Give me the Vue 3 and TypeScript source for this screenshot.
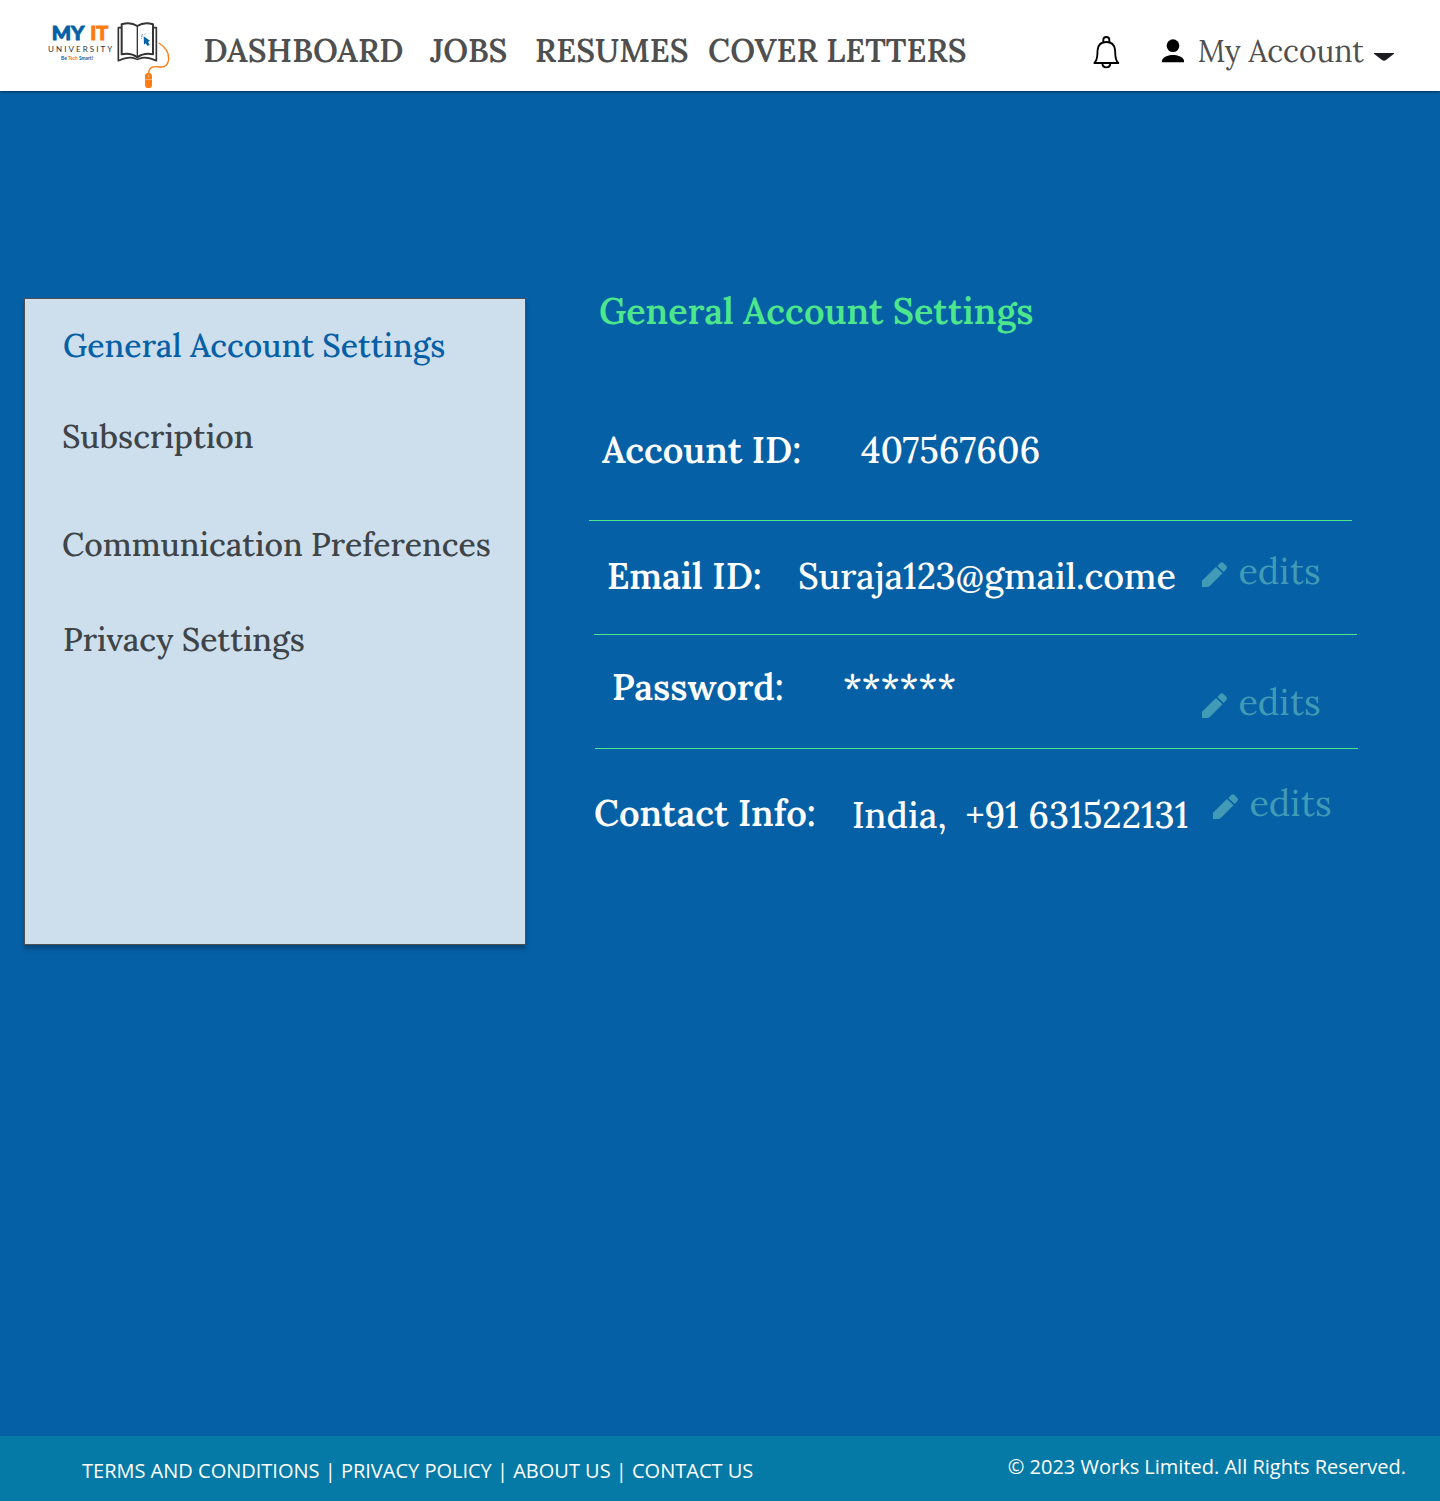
<script setup lang="ts">
interface Row {
  name: string
  label: string
  value: string
  editable: boolean
}

const nav: { text: string; kind: string }[] = [
  { text: 'DASHBOARD', kind: 'dashboard' },
  { text: 'JOBS', kind: 'jobs' },
  { text: 'RESUMES', kind: 'resumes' },
  { text: 'COVER LETTERS', kind: 'letters' },
]

const menu: { text: string; kind: string }[] = [
  { text: 'General Account Settings', kind: 'general' },
  { text: 'Subscription', kind: 'subscription' },
  { text: 'Communication Preferences', kind: 'communication' },
  { text: 'Privacy Settings', kind: 'privacy' },
]

const rows: Row[] = [
  { name: 'account', label: 'Account ID:', value: '407567606', editable: false },
  { name: 'email', label: 'Email ID:', value: 'Suraja123@gmail.come', editable: true },
  { name: 'password', label: 'Password:', value: '******', editable: true },
  { name: 'contact', label: 'Contact Info:', value: 'India,  +91 631522131', editable: true },
]
</script>

<template>
  <div class="page">
    <header class="topbar">
      <svg class="logo" viewBox="0 0 420 240" width="140" height="80">
        <text x="35" y="91" class="logo-my" textLength="98" lengthAdjust="spacingAndGlyphs">MY</text>
        <text x="151" y="91" class="logo-it" textLength="54" lengthAdjust="spacingAndGlyphs">IT</text>
        <text x="24" y="127" class="logo-uni" textLength="193">UNIVERSITY</text>
        <text x="63" y="149" class="logo-tag" textLength="96" lengthAdjust="spacingAndGlyphs">Be <tspan fill="#ff7a0f">Tech</tspan> Smart!</text>
        <g fill="none" stroke="#343436" stroke-width="6" stroke-linejoin="round">
          <path d="M245 43 Q272 35 292 48 Q312 35 339 43 V133 Q312 127 292 142 Q272 127 245 133 Z" />
          <path d="M292 48 V140" stroke-width="4" />
          <path d="M245 53 H235 V152 Q268 138 286 146 Q292 150 298 146 Q318 138 349 152 V53 H339" stroke-width="5" />
        </g>
        <path d="M311 79 L330 92 L324 96 L329 104 L323 108 L317 100 L312 104 Z" fill="#0560a6" />
        <path d="M308 72 V76 M303 80 H307 M304 75 L306 77 M314 74 L316 71 M304 86 L306 84" stroke="#0560a6" stroke-width="2" />
        <path d="M356 99 C374 108 387 128 386 146 C385 164 376 172 360 171 C340 168 326 171 326 191" fill="none" stroke="#ff7a0f" stroke-width="4" />
        <rect x="315" y="189" width="21" height="45" rx="10" fill="#ff7a0f" />
        <path d="M315 208 H336 M325.500 194 V203" stroke="#ffd2aa" stroke-width="2" />
      </svg>
      <nav class="nav">
        <a v-for="n in nav" :key="n.kind" :class="n.kind">{{ n.text }}</a>
      </nav>
      <svg class="bell" viewBox="38 44 80 104" width="26.670" height="34.670">
        <g fill="none" stroke="#000" stroke-width="5.500">
          <path d="M42 128 C54 116 50 102 52 88 C54 72 64 65 78 65 C92 65 102 72 104 88 C106 102 102 116 114 128 Z" stroke-linejoin="round" />
          <path d="M69 66 V58 Q69 50 78 50 Q87 50 87 58 V66" />
          <path d="M66 129 Q67 141 78 141 Q89 141 90 129" />
        </g>
      </svg>
      <svg class="person" viewBox="246 56 66 72" width="22" height="24">
        <circle cx="279" cy="76" r="19" />
        <path d="M246 126 V120 C250 108 266 104 279 104 C292 104 308 108 312 120 V126 Z" />
      </svg>
      <span class="account-name">My Account</span>
      <svg class="caret" viewBox="0 0 60 24" width="20" height="8">
        <path d="M1 0 H59 Q62 3 56 5 L36 21 Q30 25 24 21 L4 5 Q-2 3 1 0Z" fill="#1c1b1f" />
      </svg>
    </header>

    <main class="content">
      <aside class="menu">
        <a v-for="m in menu" :key="m.kind" :class="m.kind">{{ m.text }}</a>
      </aside>
      <section class="settings">
        <h1>General Account Settings</h1>
        <div v-for="r in rows" :key="r.name" class="row" :class="r.name">
          <span class="label">{{ r.label }}</span>
          <span class="value">{{ r.value }}</span>
          <a v-if="r.editable" class="edit">
            <svg viewBox="0 0 25 25" width="25" height="25">
              <path d="M0 18.700 L14 5 L20.500 11.300 L8 23.800 Q6.800 25 5.200 25 H0 Z M15.300 3.900 L18.200 1 Q19.800 -0.500 21.400 1 L24.200 3.700 Q25.700 5.300 24.300 6.900 L21.700 10 Z" fill="currentColor" />
            </svg>
            <span>edits</span>
          </a>
        </div>
      </section>
    </main>

    <footer class="footer">
      <span class="links">TERMS AND CONDITIONS | PRIVACY POLICY | ABOUT US | CONTACT US</span>
      <span class="copyright">© 2023 Works Limited. All Rights Reserved.</span>
    </footer>
  </div>
</template>

<style>
body {
  margin: 0;
}
</style>

<style scoped>
.page {
  width: 1440px;
  height: 1501px;
  display: flex;
  flex-direction: column;
  overflow: hidden;
  background: #0560a6;
  font-family: Lora, "Liberation Serif", serif;
  white-space: pre;
}
.topbar {
  height: 91px;
  flex: none;
  display: flex;
  align-items: flex-start;
  background: #fff;
  box-shadow: 0 1px 2px rgba(0, 0, 0, 0.5);
  color: #4f4f4f;
}
.logo {
  flex: none;
  margin: 10px 0 0 40px;
}
.logo text {
  font-family: Lato, sans-serif;
}
.logo .logo-my,
.logo .logo-it {
  font-size: 54px;
  font-weight: 900;
  fill: #0560a6;
  stroke: #0560a6;
  stroke-width: 2.5px;
}
.logo .logo-it {
  fill: #ff7a0f;
  stroke: #ff7a0f;
}
.logo .logo-uni {
  font-size: 24px;
  fill: #333;
}
.logo .logo-tag {
  font-size: 17px;
  font-weight: 700;
  fill: #0560a6;
}
.nav {
  display: flex;
  width: 889px;
  margin-left: 24px;
  font-size: 32px;
  font-weight: 600;
  line-height: 40px;
  padding-top: 31px;
}
.nav .dashboard {
  width: 226.5px;
  margin-left: -0.5px;
}
.nav .jobs {
  width: 105px;
}
.nav .resumes {
  width: 173px;
}
.bell {
  flex: none;
  margin-top: 35px;
}
.person {
  flex: none;
  margin: 39px 0 0 42px;
}
.account-name {
  width: 176px;
  margin: 31px 0 0 14px;
  font-size: 30px;
  line-height: 40px;
}
.caret {
  flex: none;
  margin-top: 53px;
}
.content {
  flex: 1;
  display: flex;
  align-items: flex-start;
}
.menu {
  box-sizing: border-box;
  width: 502px;
  height: 647px;
  margin: 207px 0 0 24px;
  padding: 27px 0 0 37px;
  display: flex;
  flex-direction: column;
  border: 1px solid #4f4f4f;
  background: #cddfed;
  box-shadow: 0 4px 4px rgba(0, 0, 0, 0.25);
  color: #3f4448;
  font-size: 32px;
  font-weight: 500;
  line-height: 40px;
}
.menu .general {
  margin-left: 1px;
  color: #0560a6;
}
.menu .subscription {
  margin-top: 51px;
}
.menu .communication {
  margin-top: 68px;
}
.menu .privacy {
  margin: 55px 0 0 1px;
}
.settings {
  margin: 195px 0 0 63px;
  font-size: 36px;
  line-height: 50px;
  color: #fff;
}
.settings h1 {
  margin: 0 0 0 10px;
  font-size: 36px;
  font-weight: 600;
  color: #4de68c;
}
.row {
  box-sizing: border-box;
  width: 763px;
  height: 114px;
  display: grid;
  align-items: start;
  border-bottom: 1px solid #4de68c;
}
.label {
  font-weight: 600;
}
.value {
  font-weight: 500;
}
.account {
  height: 185px;
  padding: 89px 0 0 13px;
  grid-template-columns: 259px 1fr;
}
.email {
  margin-left: 5px;
  padding: 25px 0 0 13px;
  grid-template-columns: 191px 404px 1fr;
}
.email .label,
.email .value {
  margin-top: 5px;
}
.email .value {
  letter-spacing: -0.06px;
}
.password {
  margin-left: 6px;
  padding: 27px 0 0 17px;
  grid-template-columns: 231px 359px 1fr;
}
.password .edit {
  margin-top: 15px;
}
.contact {
  border-bottom: 0;
  padding: 29px 0 0 5px;
  grid-template-columns: 258px 361px 1fr;
}
.contact .label {
  margin-top: 10px;
}
.contact .value {
  margin-top: 12px;
}
.edit {
  display: flex;
  gap: 11.5px;
  height: 50px;
  color: #429bb6;
}
.edit svg {
  flex: none;
  margin-top: 16px;
}
.footer {
  height: 65px;
  flex: none;
  display: flex;
  justify-content: space-between;
  background: #057aa6;
  color: #fff;
  font-family: "Open Sans", sans-serif;
  font-size: 20px;
  line-height: 28px;
}
.links {
  margin: 21px 0 0 82px;
}
.copyright {
  margin: 17px 34px 0 0;
}
</style>
